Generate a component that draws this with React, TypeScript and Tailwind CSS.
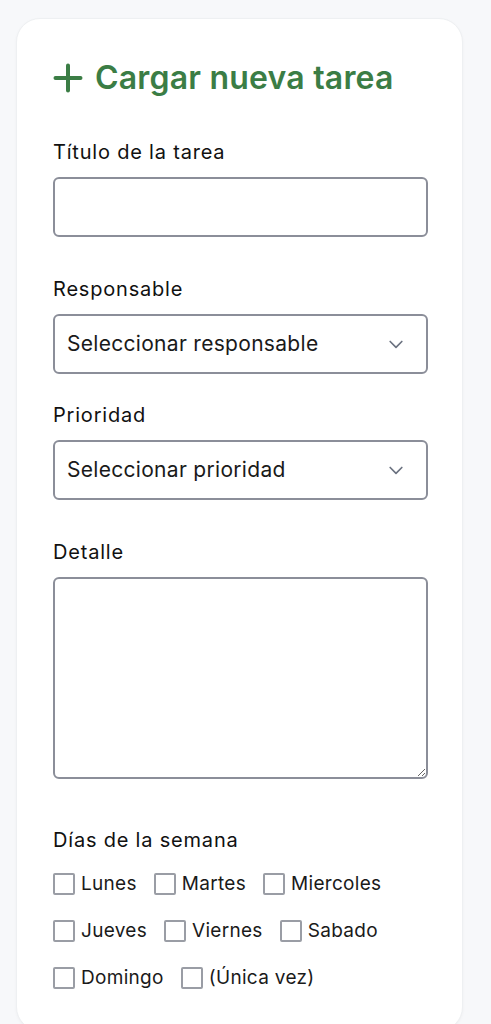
import React from "react";

const days = [
  ["Lunes", "Martes", "Miercoles"],
  ["Jueves", "Viernes", "Sabado"],
  ["Domingo", "(Única vez)"],
];

function Chevron() {
  return (
    <svg width="20" height="20" viewBox="0 0 24 24" fill="none" stroke="#6b7280" strokeWidth="2" strokeLinecap="round" strokeLinejoin="round">
      <path d="M5 9l7 7 7-7" />
    </svg>
  );
}

export default function App() {
  return (
    <div className="min-h-[1024px] bg-[#f7f8fa] pt-[18px] pl-4 pr-7" style={{ fontFamily: "Inter, 'Noto Sans', sans-serif" }}>
      <div className="bg-white rounded-[24px] border border-[#eef0f2] shadow-[0_1px_3px_rgba(0,0,0,0.04)] pl-9 pr-[34px] pt-[39px] pb-10 min-h-[1010px]">
        <h1 className="flex items-center gap-[12px] text-[#3b7d45] text-[32px] leading-[40px] font-semibold tracking-[0.2px]">
          <svg width="30" height="30" viewBox="0 0 30 30" fill="none" stroke="#3b7d45" strokeWidth="4" strokeLinecap="round">
            <path d="M15 2.5v25M2.5 15h25" />
          </svg>
          <span>Cargar nueva tarea</span>
        </h1>

        <label className="block mt-[42px] text-[20px] leading-6 text-[#111] font-normal tracking-[0.8px]">Título de la tarea</label>
        <input className="mt-[13px] block w-full h-[60px] rounded-[6px] border-2 border-[#8b8e99] bg-white" />

        <label className="block mt-[40px] text-[20px] leading-6 text-[#111] font-normal tracking-[0.8px]">Responsable</label>
        <div className="mt-[13px] flex items-center justify-between h-[60px] rounded-[6px] border-2 border-[#8b8e99] pl-3 pr-5 text-[21px] text-[#1a1a1a] tracking-[0.3px]">
          <span>Seleccionar responsable</span>
          <Chevron />
        </div>

        <label className="block mt-[29px] text-[20px] leading-6 text-[#111] font-normal tracking-[0.8px]">Prioridad</label>
        <div className="mt-[13px] flex items-center justify-between h-[60px] rounded-[6px] border-2 border-[#8b8e99] pl-3 pr-5 text-[21px] text-[#1a1a1a] tracking-[0.3px]">
          <span>Seleccionar prioridad</span>
          <Chevron />
        </div>

        <label className="block mt-[40px] text-[20px] leading-6 text-[#111] font-normal tracking-[0.8px]">Detalle</label>
        <textarea className="mt-[13px] block w-full h-[202px] rounded-[6px] border-2 border-[#8b8e99] bg-white resize-y" />

        <label className="block mt-[49px] text-[20px] leading-6 text-[#111] font-normal tracking-[0.8px]">Días de la semana</label>
        <div className="mt-[20px] flex flex-col gap-[23px]">
          {days.map((row, i) => (
            <div key={i} className="flex items-center gap-[17px]">
              {row.map((d) => (
                <label key={d} className="flex items-center gap-[6px] text-[19px] leading-6 text-[#1a1a1a] tracking-[0.3px]">
                  <span className="inline-block w-[22px] h-[22px] border-2 border-[#9a9da5] rounded-[2px] bg-white" />
                  {d}
                </label>
              ))}
            </div>
          ))}
        </div>
      </div>
    </div>
  );
}
